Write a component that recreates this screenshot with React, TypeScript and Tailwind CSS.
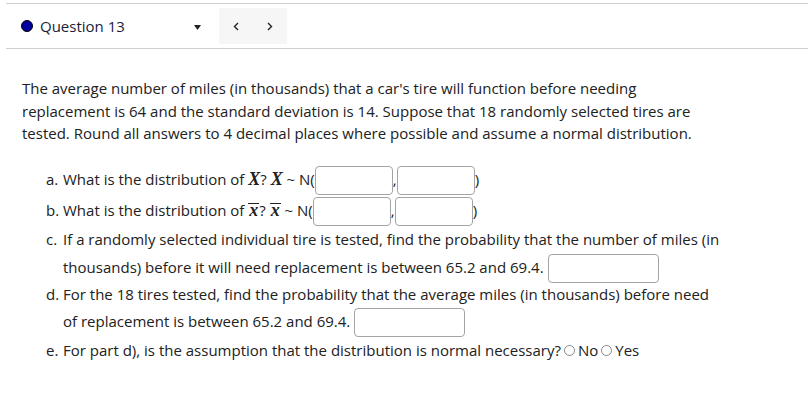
import React from "react";

const FONT = { fontFamily: '"Open Sans", "Liberation Sans", sans-serif' };

function Box({ w }: { w: number }) {
  return (
    <span
      className="inline-block h-[29px] -my-[4px] align-middle rounded-[4px] border border-[#a4a4a4] bg-white"
      style={{ width: w }}
    />
  );
}

function MathX({ bar }: { bar?: boolean }) {
  if (bar) {
    return (
      <span
        className="inline-block font-bold italic text-[18px] leading-[13px] border-t border-[#212121] px-[1px]"
        style={{ fontFamily: '"Liberation Serif", "DejaVu Serif", serif' }}
      >
        x
      </span>
    );
  }
  return (
    <span
      className="font-bold italic text-[18px] leading-none"
      style={{ fontFamily: '"Liberation Serif", "DejaVu Serif", serif' }}
    >
      X
    </span>
  );
}

function Radio() {
  return (
    <span className="inline-block w-[11px] h-[11px] rounded-full border border-[#8a8a8a] bg-white align-middle mx-[3px] -mt-[2px]" />
  );
}

function Item({
  label,
  children,
  lead = "leading-[28px]",
}: {
  label: string;
  children: React.ReactNode;
  lead?: string;
}) {
  return (
    <li className={"flex " + lead}>
      <span className="w-[17px] shrink-0">{label}</span>
      <div className="flex-1">{children}</div>
    </li>
  );
}

export default function App() {
  return (
    <div className="w-[808px] h-[402px] bg-white text-[15px] text-[#212121]" style={FONT}>
      {/* header */}
      <div className="ml-[6px] mt-[3px] border-t border-b border-[#cfcfcf] h-[46px] flex items-center">
        <div className="w-[195px] flex items-center pl-[15px]">
          <span className="w-[12px] h-[12px] rounded-full bg-[#00009c] border border-black" />
          <span className="ml-[7px] text-[#1b1b3a]">Question 13</span>
          <svg className="ml-auto mt-[2px]" width="7" height="5" viewBox="0 0 7 5">
            <path d="M0 0h7L3.5 5z" fill="#222" />
          </svg>
        </div>
        <div className="ml-[18px] w-[68px] h-[36px] bg-[#f6f6f6] flex items-center justify-between px-[14px]">
          <svg width="6" height="9" viewBox="0 0 6 9">
            <path d="M5 1L1.5 4.5 5 8" stroke="#222" strokeWidth="1.4" fill="none" />
          </svg>
          <svg width="6" height="9" viewBox="0 0 6 9">
            <path d="M1 1l3.5 3.5L1 8" stroke="#222" strokeWidth="1.4" fill="none" />
          </svg>
        </div>
      </div>

      {/* body */}
      <div className="w-[722px] pl-[22px] pt-[28px]">
        <p className="leading-[22.5px]">
          The average number of miles (in thousands) that a car's tire will function before needing
          replacement is 64 and the standard deviation is 14. Suppose that 18 randomly selected tires
          are tested. Round all answers to 4 decimal places where possible and assume a normal
          distribution.
        </p>

        <ul className="mt-[19px] pl-[24px]">
          <Item label="a." lead="leading-[31px]">
            What is the distribution of <MathX />? <MathX /> ~ N(
            <Box w={78} />,<Box w={78} />)
          </Item>
          <Item label="b." lead="leading-[30px]">
            What is the distribution of <MathX bar />? <MathX bar /> ~ N(
            <Box w={78} />,<Box w={78} />)
          </Item>
          <Item label="c." lead="leading-[28px]">
            If a randomly selected individual tire is tested, find the probability that the number of
            miles (in thousands) before it will need replacement is between 65.2 and 69.4.{" "}
            <Box w={111} />
          </Item>
          <Item label="d." lead="leading-[27.5px]">
            For the 18 tires tested, find the probability that the average miles (in thousands) before
            need of replacement is between 65.2 and 69.4. <Box w={111} />
          </Item>
          <Item label="e.">
            For part d), is the assumption that the distribution is normal necessary?
            <Radio />
            No
            <Radio />
            Yes
          </Item>
        </ul>
      </div>
    </div>
  );
}
